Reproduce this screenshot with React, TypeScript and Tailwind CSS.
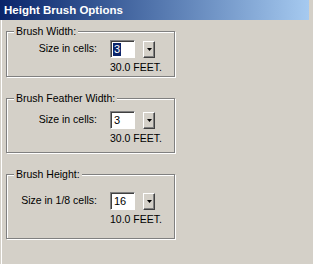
import React from 'react';

const font = { fontFamily: '"Liberation Sans", Arial, sans-serif' };

interface SizeFieldProps {
  label: string;
  value: string;
  feet: string;
  selected?: boolean;
}

const SizeField: React.FC<SizeFieldProps> = ({ label, value, feet, selected }) => (
  <div className="flex flex-col">
    <div className="flex items-start">
      <span className="w-[90px] text-right text-[10.5px] leading-[17px] text-black">{label}</span>
      <div className="ml-[13px] w-[25px] h-[18px] bg-white border-t border-l border-[#808080] border-b border-r border-b-white border-r-white shadow-[inset_1px_1px_0_#404040] flex items-center pl-[2px]">
        <span
          className={`text-[11px] leading-[13px] px-px ${selected ? 'bg-[#0a246a] text-white' : 'text-black'}`}
        >
          {value}
        </span>
      </div>
      {/* dropdown arrow button */}
      <div className="ml-[8px] mt-[1px] w-[12px] h-[17px] bg-[#d4d0c8] border-t border-l border-white border-b border-r border-b-[#404040] border-r-[#404040] shadow-[inset_-1px_-1px_0_#808080] flex items-center justify-center">
        <svg width="5" height="3" viewBox="0 0 5 3">
          <polygon points="0,0 5,0 2.5,3" fill="#000" />
        </svg>
      </div>
    </div>
    <span className="ml-[103px] mt-[3px] text-[10.5px] leading-[12px] text-black">{feet}</span>
  </div>
);

interface GroupProps {
  title: string;
  height: string;
  pad: string;
  children: React.ReactNode;
}

const Group: React.FC<GroupProps> = ({ title, height, pad, children }) => (
  <div
    className={`relative w-[169px] ${height} ${pad} border border-[#808080] shadow-[inset_1px_1px_0_#fff,1px_1px_0_#fff]`}
  >
    <span className="absolute -top-[8px] left-[7px] px-[2px] bg-[#d4d0c8] text-[10.5px] leading-[14px] text-black">
      {title}
    </span>
    {children}
  </div>
);

export default function App() {
  return (
    <div className="w-[313px] h-[264px] bg-[#d4d0c8] flex flex-col overflow-hidden" style={font}>
      <div className="h-[20px] mr-[4px] flex items-center pl-[4px] bg-gradient-to-r from-[#0a246a] to-[#a6caf0]">
        <span className="text-white font-bold text-[11.5px] leading-[14px]">Height Brush Options</span>
      </div>
      <div className="flex-1 ml-px border-l border-white pl-[4px] pt-[11px] flex flex-col gap-[21px]">
        <Group title="Brush Width:" height="h-[46px]" pad="pt-[8px]">
          <SizeField label="Size in cells:" value="3" feet="30.0 FEET." selected />
        </Group>
        <Group title="Brush Feather Width:" height="h-[55px]" pad="pt-[12px]">
          <SizeField label="Size in cells:" value="3" feet="30.0 FEET." />
        </Group>
        <Group title="Brush Height:" height="h-[65px]" pad="pt-[17px]">
          <SizeField label="Size in 1/8 cells:" value="16" feet="10.0 FEET." />
        </Group>
      </div>
    </div>
  );
}
